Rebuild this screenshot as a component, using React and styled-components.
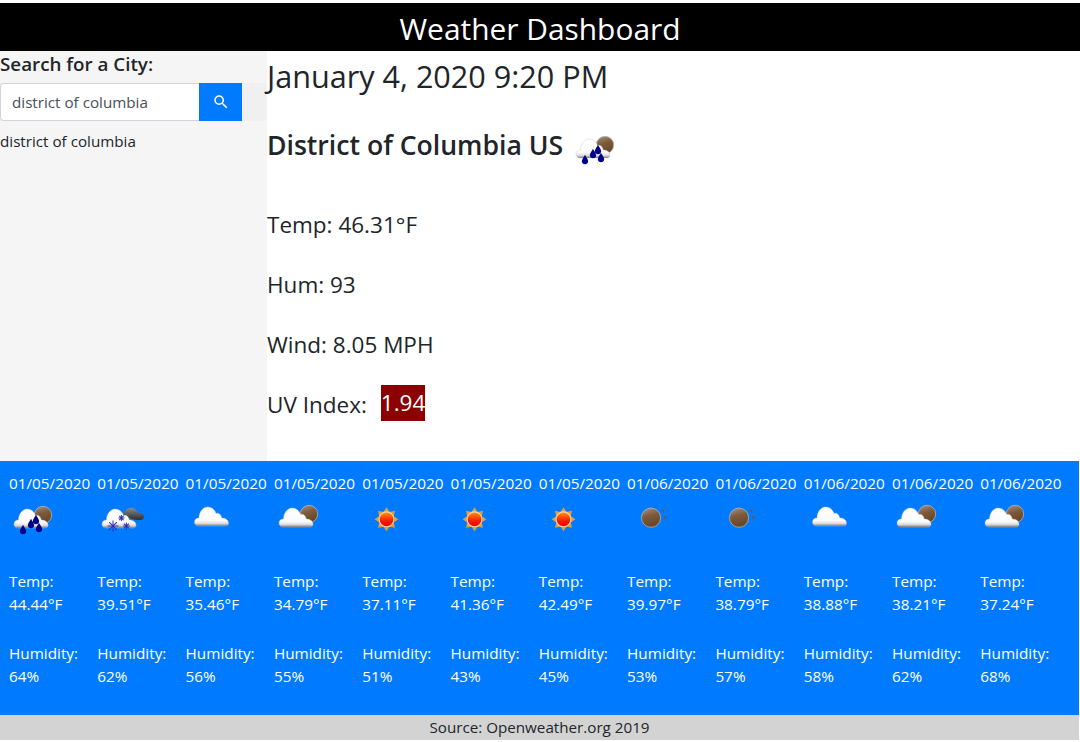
import React from 'react';
import styled, { createGlobalStyle } from 'styled-components';
import { MdSearch } from 'react-icons/md';

const forecast = [
  { date: '01/05/2020', icon: 'rain', temp: '44.44', hum: 64 },
  { date: '01/05/2020', icon: 'snow', temp: '39.51', hum: 62 },
  { date: '01/05/2020', icon: 'cloud', temp: '35.46', hum: 56 },
  { date: '01/05/2020', icon: 'cloudMoon', temp: '34.79', hum: 55 },
  { date: '01/05/2020', icon: 'sun', temp: '37.11', hum: 51 },
  { date: '01/05/2020', icon: 'sun', temp: '41.36', hum: 43 },
  { date: '01/05/2020', icon: 'sun', temp: '42.49', hum: 45 },
  { date: '01/06/2020', icon: 'moon', temp: '39.97', hum: 53 },
  { date: '01/06/2020', icon: 'moon', temp: '38.79', hum: 57 },
  { date: '01/06/2020', icon: 'cloud', temp: '38.88', hum: 58 },
  { date: '01/06/2020', icon: 'cloudMoon', temp: '38.21', hum: 62 },
  { date: '01/06/2020', icon: 'cloudMoon', temp: '37.24', hum: 68 },
];

const CLOUD = 'M4 19C1.5 19 0 17.3 0 15C0 12.5 2 10.8 4.5 11C4.5 5 8.5 0 13 0C17.5 0 20.5 3 21.5 6.5C23.5 5.5 26.5 6.5 27.3 11C31 11 34 13 34 16C34 18 33 19 31 19Z';
const DARK_CLOUD = 'M27 20C27 14 32 12 36 13C39 14 40 17 42 18C45 18 47 20 47 22C47 24 45 25 43 25C38 25 32 24 27 20Z';
const DROP = 'M0 -5C1 -2.5 3 -1 3 1.2C3 3 1.6 4 0 4C-1.6 4 -3 3 -3 1.2C-3 -1 -1 -2.5 0 -5Z';
const RAYS = [0, 45, 90, 135, 180, 225, 270, 315];

const Cloud = ({ x, y }) => (
  <g transform={`translate(${x} ${y})`}>
    <path d={CLOUD} fill="url(#cloudFill)" stroke="#c4c4c4" strokeOpacity="0.55" strokeWidth="0.7" />
  </g>
);

const MoonDisc = ({ x, y, r }) => (
  <circle cx={x} cy={y} r={r} fill="url(#moonFill)" stroke="#b9b2aa" strokeWidth="0.8" />
);

const Flake = ({ x, y, r }) => (
  <g transform={`translate(${x} ${y})`} stroke="#2a2db8" strokeWidth="1">
    {[0, 45, 90, 135].map((a) => (
      <line key={a} x1={-r} x2={r} y1="0" y2="0" transform={`rotate(${a})`} />
    ))}
  </g>
);

const WeatherIcon = ({ kind }) => (
  <IconSvg viewBox="0 0 50 50">
    {kind === 'rain' && (
      <>
        <MoonDisc x={34} y={20} r={8.7} />
        <Cloud x={5} y={14} />
        {[[14, 35], [22, 29], [27, 25], [30, 33]].map(([x, y]) => (
          <path key={x} d={DROP} transform={`translate(${x} ${y}) scale(1.05)`} fill="#00008b" />
        ))}
      </>
    )}
    {kind === 'snow' && (
      <>
        <path d={DARK_CLOUD} fill="url(#darkFill)" />
        <Cloud x={5} y={14} />
        <Flake x={16} y={31} r={5.5} />
        <Flake x={24.4} y={23} r={3} />
        <Flake x={29.4} y={31} r={3.5} />
      </>
    )}
    {kind === 'cloud' && <Cloud x={8.5} y={12} />}
    {kind === 'cloudMoon' && (
      <>
        <MoonDisc x={35} y={19} r={8.7} />
        <Cloud x={5} y={13} />
      </>
    )}
    {kind === 'sun' && (
      <g transform="translate(24.5 24.3)">
        {RAYS.map((a) => (
          <path key={a} d="M-4.2 -5.5L0 -12L4.2 -5.5Z" fill="#d9a03f" transform={`rotate(${a})`} />
        ))}
        <circle r="7.4" fill="url(#sunFill)" stroke="#f9d3bd" strokeWidth="1.1" />
      </g>
    )}
    {kind === 'moon' && (
      <>
        <MoonDisc x={24} y={22.7} r={9.6} />
        <circle cx={36.4} cy={16} r={1.6} fill="#6a5a52" />
        <circle cx={38} cy={22.4} r={1.4} fill="#6a5a52" />
      </>
    )}
  </IconSvg>
);

const App = () => (
  <>
    <GlobalStyle />
    <GradientDefs width="0" height="0">
      <defs>
        <linearGradient id="cloudFill" x1="0" y1="0" x2="0" y2="1">
          <stop offset="0" stopColor="#ffffff" />
          <stop offset="0.72" stopColor="#fbfbfb" />
          <stop offset="0.88" stopColor="#d8d8d8" />
          <stop offset="1" stopColor="#6d6d6d" />
        </linearGradient>
        <linearGradient id="moonFill" x1="0.3" y1="0" x2="0.6" y2="1">
          <stop offset="0" stopColor="#a08b7a" />
          <stop offset="0.4" stopColor="#7d5a3b" />
          <stop offset="1" stopColor="#66431f" />
        </linearGradient>
        <linearGradient id="darkFill" x1="0" y1="0" x2="0" y2="1">
          <stop offset="0" stopColor="#8a8a8a" />
          <stop offset="1" stopColor="#2e2e2e" />
        </linearGradient>
        <linearGradient id="sunFill" x1="0" y1="0" x2="0" y2="1">
          <stop offset="0" stopColor="#ff9d00" />
          <stop offset="0.6" stopColor="#f81a00" />
          <stop offset="1" stopColor="#f00000" />
        </linearGradient>
      </defs>
    </GradientDefs>
    <Header>Weather Dashboard</Header>
    <Middle>
      <Sidebar>
        <SearchLabel>Search for a City:</SearchLabel>
        <SearchRow>
          <SearchInput readOnly value="district of columbia" />
          <SearchButton type="button">
            <MdSearch size={18} />
          </SearchButton>
        </SearchRow>
        <HistoryItem>district of columbia</HistoryItem>
      </Sidebar>
      <Current>
        <DateLine>January 4, 2020 9:20 PM</DateLine>
        <CityLine>
          District of Columbia US
          <WeatherIcon kind="rain" />
        </CityLine>
        <Stat>Temp: 46.31°F</Stat>
        <Stat>Hum: 93</Stat>
        <Stat>Wind: 8.05 MPH</Stat>
        <Stat>
          UV Index:
          <UvBadge>1.94</UvBadge>
        </Stat>
      </Current>
    </Middle>
    <Forecast>
      {forecast.map((day, i) => (
        <DayCard key={i}>
          <DayDate>{day.date}</DayDate>
          <WeatherIcon kind={day.icon} />
          <DayStat>
            Temp:
            <br />
            {day.temp}°F
          </DayStat>
          <DayStat>
            Humidity:
            <br />
            {day.hum}%
          </DayStat>
        </DayCard>
      ))}
    </Forecast>
    <Footer>Source: Openweather.org 2019</Footer>
  </>
);

export default App;

const GlobalStyle = createGlobalStyle`
  body {
    margin: 0;
    padding-top: 3px;
    background: #fff;
    color: #212529;
    font-family: "Open Sans", "Noto Sans", sans-serif;
  }
`;

const GradientDefs = styled.svg`
  position: absolute;
`;

const Header = styled.header`
  height: 48px;
  background: #000;
  color: #fff;
  font-size: 29.9px;
  line-height: 52px;
  text-align: center;
`;

const Middle = styled.div`
  display: flex;
  height: 410px;
`;

const Sidebar = styled.aside`
  width: 267px;
  background: #f5f5f5;
`;

const SearchLabel = styled.div`
  font-size: 18.8px;
  font-weight: 600;
  line-height: 26px;
`;

const SearchRow = styled.div`
  display: flex;
  height: 38px;
  margin-top: 6px;
  background: #f0f0f0;
`;

const SearchInput = styled.input`
  box-sizing: border-box;
  width: 199px;
  padding: 0 11px;
  border: 1px solid #ced4da;
  border-right: none;
  border-radius: 4px 0 0 4px;
  background: #fff;
  color: #495057;
  font: 15.2px "Open Sans", "Noto Sans", sans-serif;
  outline: none;
`;

const SearchButton = styled.button`
  display: flex;
  align-items: center;
  justify-content: center;
  width: 43px;
  padding: 0;
  border: none;
  background: #007bff;
  color: #fff;
`;

const HistoryItem = styled.div`
  margin-top: 8px;
  font-size: 15.2px;
  line-height: 24px;
`;

const Current = styled.main`
  flex: 1;
`;

const DateLine = styled.h2`
  margin: 5px 0 0;
  font-size: 30.6px;
  font-weight: 400;
  line-height: 40px;
`;

const CityLine = styled.h3`
  display: flex;
  align-items: center;
  height: 50px;
  margin: 24px 0 36px;
  font-size: 26.6px;
  font-weight: 600;
  line-height: 50px;

  svg {
    margin: 10px 0 0 8px;
  }
`;

const Stat = styled.p`
  display: flex;
  align-items: center;
  height: 36px;
  margin: 0 0 24px;
  font-size: 22.5px;
`;

const UvBadge = styled.span`
  height: 36px;
  margin-left: 14px;
  background: #8b0000;
  color: #fff;
  line-height: 36px;
  position: relative;
  top: -1px;
`;

const Forecast = styled.section`
  display: grid;
  grid-template-columns: repeat(12, 88.3px);
  box-sizing: border-box;
  width: 1079px;
  height: 254px;
  padding: 10px 0 0 9px;
  background: #007bff;
  color: #fff;
`;

const DayCard = styled.div`
  font-size: 15.3px;
  line-height: 23px;
`;

const DayDate = styled.div`
  line-height: 24px;
  white-space: nowrap;
`;

const IconSvg = styled.svg`
  display: block;
  flex: none;
  width: 50px;
  height: 50px;
  margin-bottom: 25px;

  h3 & {
    margin-bottom: 0;
  }
`;

const DayStat = styled.p`
  margin: 0 0 26px;
`;

const Footer = styled.footer`
  width: 1079px;
  height: 25px;
  background: #d3d3d3;
  font-size: 15.2px;
  line-height: 25px;
  text-align: center;
`;
